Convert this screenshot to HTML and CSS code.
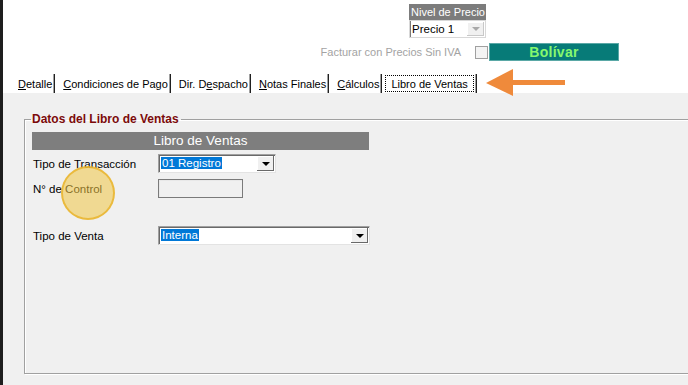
FILE: index.html
```html
<!DOCTYPE html>
<html lang="es">
<head>
    <meta charset="UTF-8">
    <title>Libro de Ventas</title>
    <link rel="stylesheet" href="styles.css">
</head>
<body>
    <div class="frame">
        <div class="top">
            <div class="priceLevel">
                <div class="priceLabel">Nivel de Precio</div>
                <div class="combo comboDisabled">
                    <span class="comboText">Precio 1</span>
                    <span class="comboBtn"><span class="arrow"></span></span>
                </div>
            </div>
            <div class="ivaRow">
                <span class="ivaText">Facturar con Precios Sin IVA</span>
                <span class="check"></span>
                <span class="currency">Bolívar</span>
            </div>
        </div>

        <div class="tabs">
            <span class="tab"><u>D</u>etalle</span>
            <span class="tab"><u>C</u>ondiciones de Pago</span>
            <span class="tab">Dir. D<u>e</u>spacho</span>
            <span class="tab"><u>N</u>otas Finales</span>
            <span class="tab"><u>C</u>álculos</span>
            <span class="tab tabActive"><span class="focus">Libro de Ventas</span></span>
        </div>

        <div class="panel">
            <fieldset class="group">
                <legend class="groupTitle">Datos del Libro de Ventas</legend>
                <div class="header">Libro de Ventas</div>
                <div class="form">
                    <label class="label">Tipo de Transacción</label>
                    <div class="combo comboShort">
                        <span class="comboText"><span class="selected">01 Registro</span></span>
                        <span class="comboBtn"><span class="arrow"></span></span>
                    </div>

                    <label class="label">N° de Control</label>
                    <div class="textbox"></div>

                    <label class="label rowGap">Tipo de Venta</label>
                    <div class="combo comboLong rowGap">
                        <span class="comboText"><span class="selected">Interna</span></span>
                        <span class="comboBtn"><span class="arrow"></span></span>
                    </div>
                </div>
            </fieldset>
        </div>

        <!-- annotations drawn over the screen capture -->
        <svg class="pointer" width="84" height="30" viewBox="0 0 84 30">
            <polygon points="2,14 29,0 29,27" fill="#ef8a3b"/>
            <rect x="28" y="11" width="53" height="5" fill="#ef8a3b"/>
        </svg>
        <div class="cursorMark"></div>
    </div>
</body>
</html>
```

FILE: styles.css
```css
body {
    margin: 0;
    font-family: 'Liberation Sans', Arial, sans-serif;
    font-size: 11px;
    color: #000;
    background-color: #fff;
}

.frame {
    position: relative;
    width: 685px;
    height: 385px;
    border-left: 3px solid #1e1e1e;
    box-shadow: inset 1px 0 0 #9a9a9a;
    overflow: hidden;
    display: flex;
    flex-direction: column;
}

.top {
    height: 74px;
    background-color: #fff;
    display: flex;
    flex-direction: column;
}

.priceLevel {
    margin-top: 4px;
    margin-left: 406px;
    width: 77px;
}

.priceLabel {
    height: 16px;
    line-height: 16px;
    background-color: #7c7c7c;
    color: #fff;
    font-size: 11px;
    padding-left: 2px;
    white-space: nowrap;
}

.combo {
    display: flex;
    height: 19px;
    box-sizing: border-box;
    border: 1px solid #a0a0a0;
    border-right-color: #e3e3e3;
    border-bottom-color: #e3e3e3;
    box-shadow: inset 1px 1px 0 #696969;
    background-color: #fff;
}

.comboDisabled {
    height: 18px;
    border: 1px solid #d8d8d8;
    box-shadow: inset 1px 0 0 #7a7a7a;
}

.comboText {
    flex: 1;
    padding: 1px 0 0 2px;
    line-height: 15px;
    font-size: 11.5px;
    white-space: nowrap;
}

.comboBtn {
    width: 17px;
    margin: 1px 1px 1px 0;
    background-color: #f0f0f0;
    box-shadow: inset -1px -1px 0 #696969, inset 1px 1px 0 #fff;
    display: flex;
    align-items: center;
    justify-content: center;
}

.arrow {
    width: 0;
    height: 0;
    border-left: 4px solid transparent;
    border-right: 4px solid transparent;
    border-top: 4px solid #000;
}

.comboDisabled .comboBtn {
    box-shadow: inset -1px -1px 0 #c8c8c8, inset 1px 1px 0 #fff;
}

.comboDisabled .arrow {
    border-top-color: #a8a8a8;
}

.ivaRow {
    margin-top: 5px;
    height: 18px;
    display: flex;
    align-items: center;
}

.ivaText {
    margin-left: 316px;
    width: 142px;
    text-align: right;
    color: #a3a3a3;
    white-space: nowrap;
}

.check {
    width: 11px;
    height: 11px;
    margin-left: 14px;
    border: 1px solid #a0a0a0;
    background-color: #f4f4f4;
}

.currency {
    margin-left: 1px;
    width: 128px;
    height: 16px;
    line-height: 16px;
    background-color: #077b78;
    border: 1px solid #5aa8a6;
    color: #86f86e;
    font-weight: bold;
    font-size: 14px;
    text-align: center;
    letter-spacing: 0.3px;
}

.tabs {
    height: 19px;
    display: flex;
    align-items: stretch;
    padding-left: 7px;
    background-color: #fff;
}

.tab {
    padding: 2px 2px 0 8px;
    line-height: 17px;
    border-right: 1px solid #202020;
    box-shadow: inset -1px 0 0 #a0a0a0;
}

.tabActive {
    padding: 1px 2px 1px 3px;
}

.focus {
    display: block;
    line-height: 15px;
    padding: 1px 5px 0;
    border: 1px dotted #000;
    height: 14px;
}

.panel {
    flex: 1;
    background-color: #f0f0f0;
    padding-top: 19px;
}

.group {
    margin: 0 -20px 0 21px;
    padding: 6px 0 0 6px;
    height: 254px;
    border: 1px solid #a0a0a0;
    box-shadow: 1px 1px 0 #fff, inset 1px 1px 0 #fff;
}

.groupTitle {
    margin-left: 0;
    padding: 0 2px 0 1px;
    color: #7c0a0a;
    font-weight: bold;
    font-size: 12px;
}

.header {
    width: 337px;
    height: 18px;
    line-height: 18px;
    background-color: #7e7e7e;
    color: #fff;
    font-size: 13.5px;
    text-align: center;
    margin-left: 1px;
}

.form {
    display: grid;
    grid-template-columns: 125px auto;
    row-gap: 6px;
    margin-top: 4px;
    margin-left: 2px;
    justify-items: start;
    align-items: center;
}

.label {
    font-size: 11.5px;
}

.rowGap {
    margin-top: 22px;
}

.comboShort {
    width: 118px;
}

.comboLong {
    width: 212px;
}

.selected {
    background-color: #0078d7;
    color: #fff;
    padding: 0 1px;
}

.textbox {
    width: 85px;
    height: 19px;
    box-sizing: border-box;
    border: 1px solid #7a7a7a;
    box-shadow: inset 1px 1px 0 #e8e8e8;
}

.pointer {
    position: absolute;
    left: 481px;
    top: 69px;
}

.cursorMark {
    position: absolute;
    left: 58px;
    top: 166px;
    width: 50px;
    height: 50px;
    border-radius: 50%;
    border: 2px solid rgba(232, 178, 40, 0.8);
    background-color: rgba(240, 198, 70, 0.55);
}
```
